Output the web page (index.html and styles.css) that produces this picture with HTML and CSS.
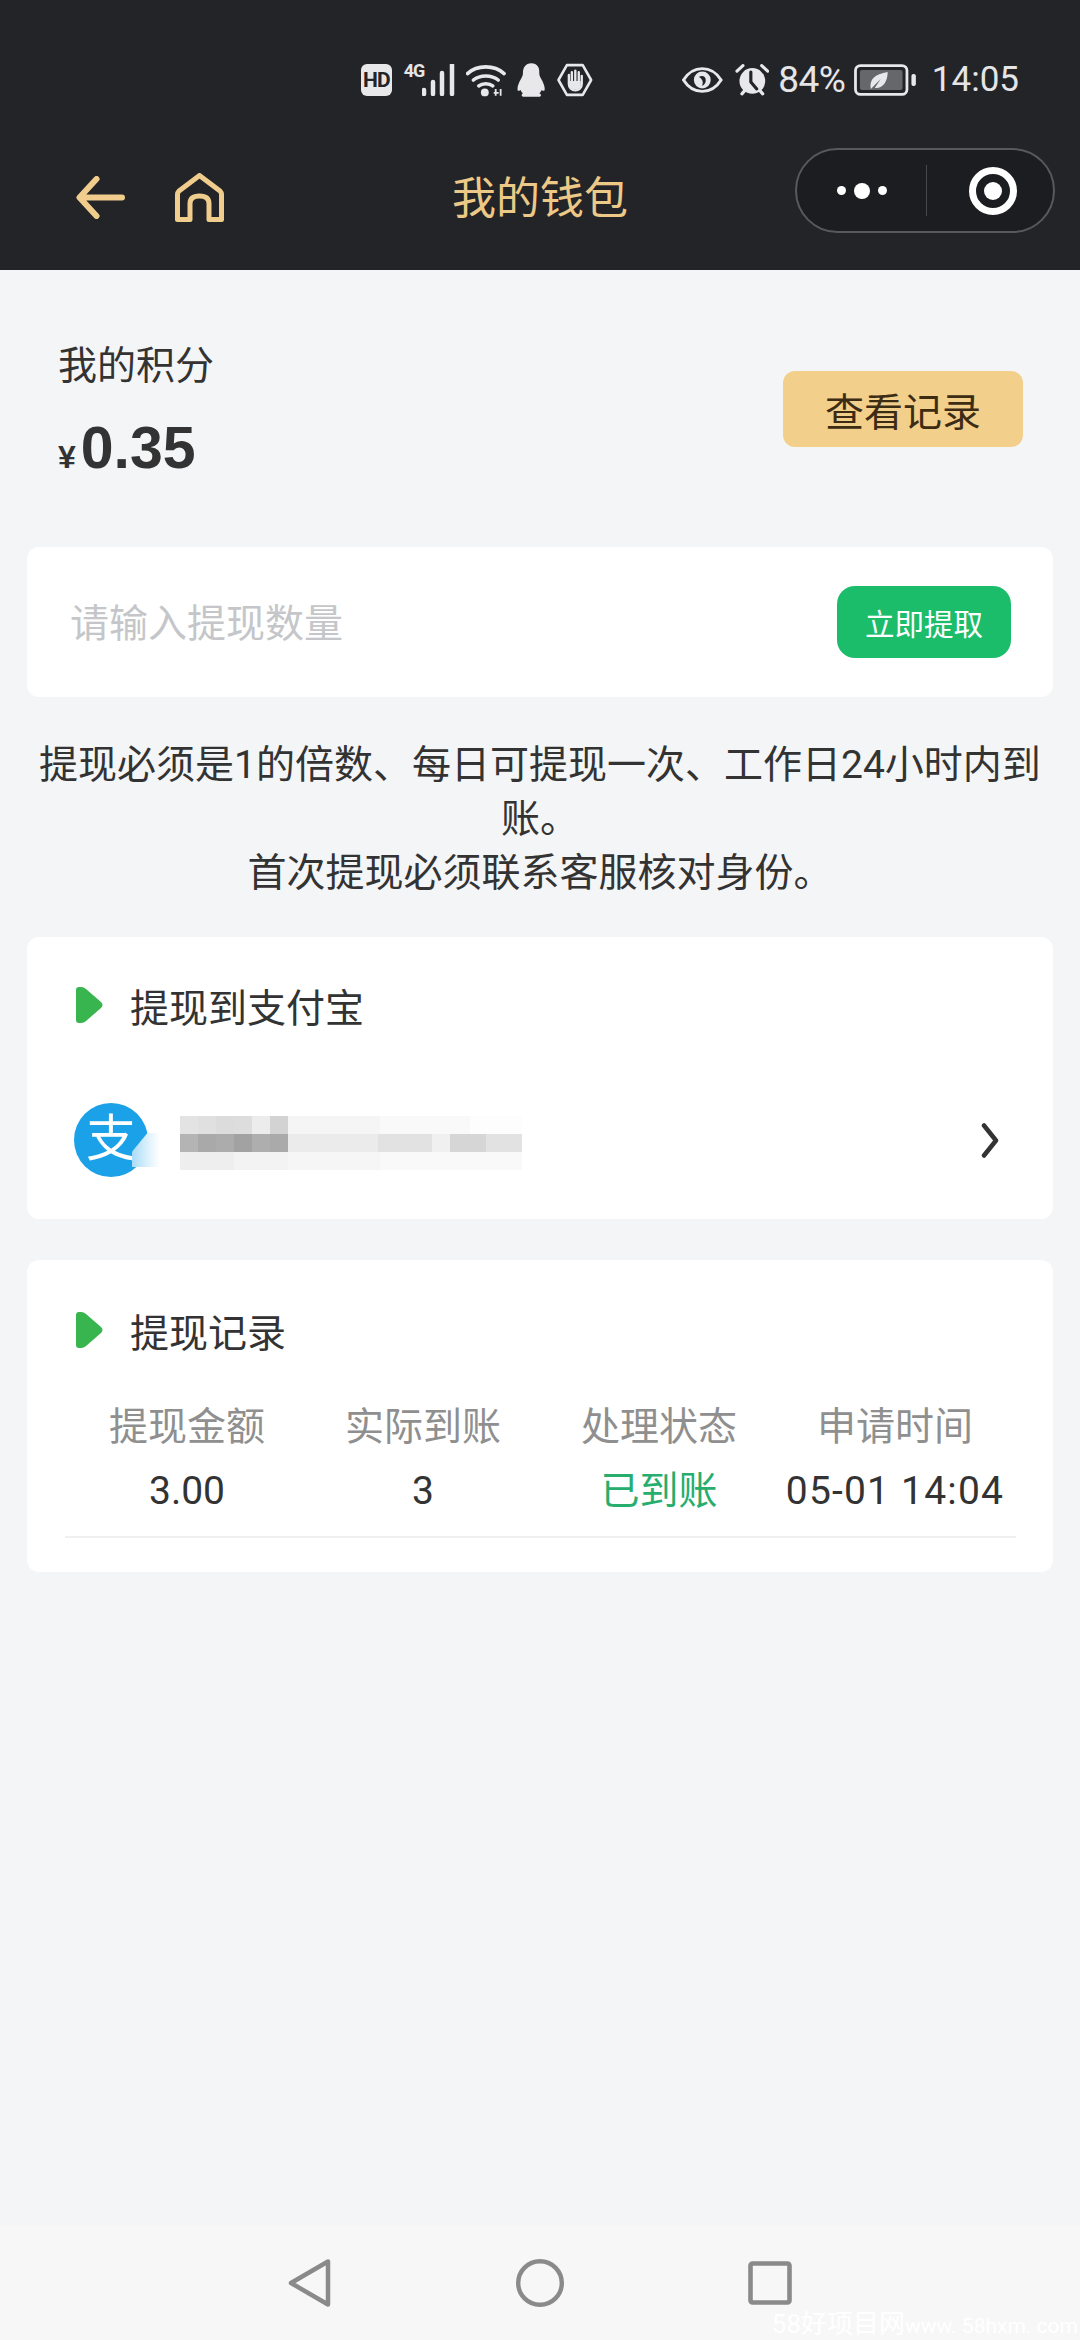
FILE: index.html
```html
<!DOCTYPE html>
<html lang="zh-CN">
  <head>
    <meta charset="UTF-8" />
    <meta name="viewport" content="width=device-width, initial-scale=1.0" />
    <title>我的钱包</title>
    <link rel="stylesheet" href="styles.css">
  </head>
  <body>
    <div class="page">
      <header class="top">
        <div class="status-bar">
          <div class="hd-badge">HD</div>
          <div class="signal">
            <span class="net-label">4G</span>
            <svg width="34" height="32" viewBox="0 0 34 32">
              <path d="M2 26v4M11 18v12M20 9v21M30 1v29" stroke="#e8e8ea" stroke-width="4.5" stroke-linecap="round" fill="none" />
            </svg>
          </div>
          <svg class="st-wifi" width="40" height="33" viewBox="0 0 40 33">
            <path d="M1.5 9.5C11.5 0.5 28.5 0.5 38.5 9.5M7.5 16C14 10.5 26 10.5 32.5 16M13 22c3.500-3 10.500-3 14 0" stroke="#e8e8ea" stroke-width="3.600" stroke-linecap="round" fill="none" />
            <circle cx="19" cy="28.500" r="4" fill="#e8e8ea" />
            <path d="M30 32v-7M35 25v7M28 29h5" stroke="#e8e8ea" stroke-width="1.800" fill="none" />
          </svg>
          <svg class="st-qq" width="29" height="34" viewBox="0 0 29 34">
            <path d="M14.500 0C8.500 0 6 4.500 6 10c0 2-.5 3.500-2 6-2 3.500-3.500 7-3.500 10 0 2 1 2.500 3 1 .8 1.500 1.500 2.500 2.500 3.500C4.500 31.500 4 33 6 34h17c2-1 1.500-2.500-.5-3.500 1-1 1.700-2 2.500-3.500 2 1.500 3 1 3-1 0-3-1.500-6.500-3.500-10-1.500-2.500-2-4-2-6C23 4.500 20.500 0 14.500 0z" fill="#e8e8ea" />
          </svg>
          <svg class="st-hand" width="36" height="34" viewBox="0 0 36 34">
            <path d="M10 2h16l8.500 15L26 32H10L1.500 17z" stroke="#e8e8ea" stroke-width="2.600" stroke-linejoin="round" fill="none" />
            <path d="M12 12v9c0 4 3 6.500 6.500 6.500S25 25 25 21v-8M15 9v9M18.500 7.500v10.500M22 9v9" stroke="#e8e8ea" stroke-width="2.400" stroke-linecap="round" fill="none" />
            <path d="M13 18h11v5c0 2-2.500 3.500-5.500 3.500S13 25 13 23z" fill="#e8e8ea" />
          </svg>

          <svg class="st-eye" width="41" height="26" viewBox="0 0 41 26">
            <path d="M1.500 13C6.500 5 13 1.500 20.500 1.500S34.500 5 39.500 13C34.500 21 28 24.500 20.500 24.500S6.500 21 1.500 13z" stroke="#e8e8ea" stroke-width="3" fill="none" />
            <circle cx="20.500" cy="13" r="8.500" fill="#e8e8ea" />
            <path d="M17 10c3-2 7-1 7 3s-2 5-4 6c2-3 1-7-3-9z" fill="#232428" />
          </svg>
          <svg class="st-alarm" width="35" height="32" viewBox="0 0 35 32">
            <path d="M2 7l6-5.500M33 7l-6-5.500M7 30l3-3.500M28 30l-3-3.500" stroke="#e8e8ea" stroke-width="3.200" stroke-linecap="round" fill="none" />
            <circle cx="17.500" cy="17" r="13" fill="#e8e8ea" />
            <path d="M16 8v10l6 7" stroke="#232428" stroke-width="3.200" stroke-linecap="round" stroke-linejoin="round" fill="none" />
          </svg>
          <span class="st-percent">84%</span>
          <svg class="st-battery" width="63" height="32" viewBox="0 0 63 32">
            <rect x="1.500" y="1.500" width="52" height="29" rx="5" stroke="#e8e8ea" stroke-width="2.800" fill="none" />
            <rect x="6" y="6" width="43" height="20" rx="2" fill="#66676a" />
            <path d="M17 25c-2-9 4-15 17-17 0 10-5 17-13 16l6-9-8 8z" fill="#e8e8ea" />
            <rect x="58" y="10" width="4.500" height="12" rx="2" fill="#e8e8ea" />
          </svg>
          <span class="st-time">14:05</span>
        </div>

        <nav class="nav">
          <div class="nav-left">
            <svg width="49" height="43" viewBox="0 0 49 43">
              <path d="M20.500 3L3.500 21.500l17 18.500M4.500 21.500h41.500" stroke="#f0cd8c" stroke-width="6" stroke-linecap="round" stroke-linejoin="round" fill="none" />
            </svg>
            <svg width="49" height="49" viewBox="0 0 49 49">
              <path d="M2.500 46.500V21.500q0-2 1.500-3.500L24.500 2.500 45 18q1.500 1.500 1.500 3.500v25H34V30.500q0-7.500-9.500-7.500T15 30.500v16z" stroke="#f0cd8c" stroke-width="5" stroke-linejoin="round" fill="none" />
            </svg>
          </div>
          <div class="nav-title">我的钱包</div>
          <div class="capsule">
            <div class="capsule-dots">
              <span class="dot"></span>
              <span class="dot dot-big"></span>
              <span class="dot"></span>
            </div>
            <span class="capsule-line"></span>
            <div class="capsule-target"></div>
          </div>
        </nav>
      </header>

      <main class="main">
        <section class="points">
          <div class="points-info">
            <div class="points-label">我的积分</div>
            <div class="points-amount"><span class="yen">¥</span>0.35</div>
          </div>
          <button class="btn-record">查看记录</button>
        </section>

        <section class="card withdraw">
          <input class="withdraw-input" type="text" placeholder="请输入提现数量" />
          <button class="btn-withdraw">立即提取</button>
        </section>

        <p class="notice">提现必须是1的倍数、每日可提现一次、工作日24小时内到账。<br />首次提现必须联系客服核对身份。</p>

        <section class="card card-alipay">
          <div class="card-title">
            <svg class="title-mark" width="27" height="36" viewBox="0 0 27 36">
              <path d="M3 0h2q3 0 5 2l15 13q3 3 0 6L10 34q-2 2-5 2H3q-3 0-3-3V3q0-3 3-3z" fill="#38b54f" />
            </svg>
            <span>提现到支付宝</span>
          </div>
          <div class="account">
            <div class="alipay-logo">
              <span class="alipay-char">支</span>
              <span class="alipay-edge"></span>
            </div>
            <div class="account-blur">
              <div class="blur-row blur-a"></div>
              <div class="blur-row blur-b"></div>
              <div class="blur-row blur-c"></div>
            </div>
            <svg class="account-arrow" width="18" height="35" viewBox="0 0 18 35">
              <path d="M3 2.500l12 15L3 32.500" stroke="#333" stroke-width="4.500" stroke-linecap="round" stroke-linejoin="round" fill="none" />
            </svg>
          </div>
        </section>

        <section class="card card-records">
          <div class="card-title">
            <svg class="title-mark" width="27" height="36" viewBox="0 0 27 36">
              <path d="M3 0h2q3 0 5 2l15 13q3 3 0 6L10 34q-2 2-5 2H3q-3 0-3-3V3q0-3 3-3z" fill="#38b54f" />
            </svg>
            <span>提现记录</span>
          </div>
          <div class="table-head">
            <div>提现金额</div>
            <div>实际到账</div>
            <div>处理状态</div>
            <div>申请时间</div>
          </div>
          <div class="table-row">
            <div>3.00</div>
            <div>3</div>
            <div class="state-ok">已到账</div>
            <div class="cell-date">05-01 14:04</div>
          </div>
        </section>
      </main>

      <footer class="sys-nav">
        <svg width="44" height="50" viewBox="0 0 44 50">
          <path d="M40 3.500v43L3 25z" stroke="#8a8a8a" stroke-width="4.500" stroke-linejoin="round" fill="none" />
        </svg>
        <svg width="48" height="48" viewBox="0 0 48 48">
          <circle cx="24" cy="24" r="21.800" stroke="#8a8a8a" stroke-width="4.400" fill="none" />
        </svg>
        <svg width="44" height="44" viewBox="0 0 44 44">
          <rect x="2.500" y="2.500" width="39" height="39" rx="2" stroke="#8a8a8a" stroke-width="4.600" fill="none" />
        </svg>
        <div class="watermark">58好项目网<span class="watermark-url">www. 58hxm. com</span></div>
      </footer>
    </div>
  </body>
</html>
```

FILE: styles.css
```css
* {
  box-sizing: border-box;
}
body {
  margin: 0;
  font-family: Roboto, "Noto Sans CJK SC", sans-serif;
  background-color: #f4f5f7;
  color: #333;
}
.page {
  display: flex;
  flex-direction: column;
  height: 2340px;
  overflow: hidden;
}

/* header */
.top {
  height: 270px;
  background-color: #232428;
}
.status-bar {
  display: flex;
  align-items: center;
  height: 97px;
  padding: 63px 61px 0 361px;
  color: #e5e5e7;
}
.hd-badge {
  width: 31px;
  height: 32px;
  border-radius: 6px;
  background-color: #e8e8ea;
  color: #232428;
  font-size: 21px;
  font-weight: 700;
  letter-spacing: -1px;
  line-height: 32px;
  text-align: center;
}
.signal {
  position: relative;
  width: 53px;
  height: 32px;
  margin-left: 12px;
  display: flex;
  justify-content: flex-end;
}
.net-label {
  position: absolute;
  left: 0;
  top: -2px;
  font-size: 18px;
  font-weight: 700;
  letter-spacing: -1px;
  line-height: 18px;
}
.st-wifi {
  margin-left: 10px;
}
.st-qq {
  margin-left: 11px;
}
.st-hand {
  margin-left: 12px;
}
.st-eye {
  margin-left: 89px;
}
.st-alarm {
  margin-left: 12px;
}
.st-percent {
  margin-left: 9px;
  font-size: 37px;
  letter-spacing: -0.5px;
  line-height: 32px;
}
.st-battery {
  margin-left: 9px;
}
.st-time {
  margin-left: 15px;
  font-size: 35px;
  line-height: 32px;
}

.nav {
  display: grid;
  grid-template-columns: 1fr auto 1fr;
  align-items: start;
  padding: 51px 25px 0;
}
.nav-left {
  display: flex;
  align-items: center;
  gap: 50px;
  margin-top: 25px;
  margin-left: 51px;
}
.nav-title {
  margin-top: 19px;
  font-size: 44px;
  line-height: 64px;
  color: #ecc987;
}
.capsule {
  justify-self: end;
  display: flex;
  align-items: center;
  width: 260px;
  height: 85px;
  border: 2px solid #58595c;
  border-radius: 43px;
  background-color: #1c1d20;
}
.capsule-dots {
  display: flex;
  align-items: center;
  justify-content: center;
  gap: 8px;
  width: 129px;
}
.dot {
  width: 9px;
  height: 9px;
  border-radius: 50%;
  background-color: #fff;
}
.dot-big {
  width: 16px;
  height: 16px;
}
.capsule-line {
  width: 1px;
  height: 51px;
  background-color: #48494c;
}
.capsule-target {
  position: relative;
  width: 48px;
  height: 48px;
  margin-left: 42px;
  border: 7px solid #fff;
  border-radius: 50%;
}
.capsule-target::after {
  content: "";
  position: absolute;
  left: 8px;
  top: 8px;
  width: 18px;
  height: 18px;
  border-radius: 50%;
  background-color: #fff;
}

/* content */
.main {
  flex: 1;
}
.points {
  display: flex;
  align-items: center;
  justify-content: space-between;
  height: 277px;
  padding: 0 57px 0 58px;
}
.points-info {
  margin-top: 6px;
}
.points-label {
  font-size: 39px;
  line-height: 54px;
}
.points-amount {
  margin-top: 27px;
  font-family: "Liberation Sans", sans-serif;
  font-size: 59px;
  font-weight: 700;
  line-height: 56px;
}
.yen {
  margin-right: 5px;
  font-size: 32px;
}
.btn-record {
  width: 240px;
  height: 76px;
  border: none;
  border-radius: 12px;
  background-color: #f3cf8c;
  color: #3d2c14;
  font-family: inherit;
  font-size: 39px;
}
.card {
  margin: 0 27px;
  border-radius: 12px;
  background-color: #fff;
}
.withdraw {
  display: flex;
  align-items: center;
  height: 150px;
  padding: 0 42px 0 43px;
}
.withdraw-input {
  flex: 1;
  min-width: 0;
  border: none;
  outline: none;
  padding: 4px 0 0;
  font-family: inherit;
  font-size: 39px;
  background: transparent;
}
.withdraw-input::placeholder {
  color: #c5c6c9;
}
.btn-withdraw {
  width: 174px;
  height: 72px;
  border: none;
  border-radius: 18px;
  background-color: #1bbd6a;
  color: #fff;
  font-family: inherit;
  font-size: 29.500px;
}
.notice {
  margin: 0;
  padding: 41px 36px 37px;
  font-size: 39px;
  line-height: 54px;
  text-align: center;
}
.card-alipay {
  height: 282px;
  padding-top: 50px;
}
.card-title {
  display: flex;
  align-items: flex-start;
  gap: 27px;
  padding-left: 49px;
  font-size: 39px;
  line-height: 44px;
}
.title-mark {
  flex: none;
}
.account {
  display: flex;
  align-items: center;
  margin-top: 72px;
  padding: 0 54px 0 47px;
}
.alipay-logo {
  position: relative;
  width: 74px;
  height: 74px;
  border-radius: 50%;
  background-color: #1ba1e8;
  text-align: center;
}
.alipay-char {
  color: #fff;
  font-size: 50px;
  line-height: 72px;
}
.alipay-edge {
  position: absolute;
  left: 58px;
  top: 30px;
  width: 28px;
  height: 34px;
  background: linear-gradient(90deg, #a9dcf8, #e9f6fd 70%, #fff);
  clip-path: polygon(55% 0, 100% 0, 100% 100%, 0 100%, 0 55%);
}
.account-blur {
  width: 342px;
  margin-top: 6px;
  margin-left: 32px;
}
.blur-row {
  height: 18px;
}
.blur-a {
  background: linear-gradient(90deg, #e3e3e3 0 18px, #e0e0e0 18px 36px, #dcdcdc 36px 54px, #dddddd 54px 72px, #ececec 72px 90px, #d3d3d3 90px 108px, #f5f5f5 108px 200px, #f9f9f9 200px 290px, #fdfdfd 290px);
}
.blur-b {
  background: linear-gradient(90deg, #b4b4b4 0 18px, #a9a9a9 18px 36px, #acacac 36px 54px, #a2a2a2 54px 72px, #aeaeae 72px 90px, #aaaaaa 90px 108px, #ebebeb 108px 198px, #e2e2e2 198px 252px, #f0f0f0 252px 270px, #d6d6d6 270px 306px, #e2e2e2 306px 342px);
}
.blur-c {
  background: linear-gradient(90deg, #eeeeee 0 54px, #f3f3f3 54px 108px, #f6f6f6 108px 200px, #f9f9f9 200px 342px);
}
.account-arrow {
  margin-left: auto;
}
.card-records {
  height: 312px;
  margin-top: 41px;
  padding-top: 52px;
}
.table-head,
.table-row {
  display: grid;
  grid-template-columns: repeat(4, 236px);
  text-align: center;
  white-space: nowrap;
  font-size: 39px;
  line-height: 54px;
}
.table-head {
  margin-top: 44px;
  margin-left: 42px;
  color: #8f8f8f;
}
.table-row {
  width: 951px;
  height: 74px;
  margin-top: 10px;
  margin-left: 38px;
  padding-left: 4px;
  border-bottom: 2px solid #f0f0f0;
}
.cell-date {
  letter-spacing: 1.200px;
}
.state-ok {
  color: #27ae6e;
}

/* bottom system bar */
.sys-nav {
  position: relative;
  display: flex;
  align-items: center;
  height: 114px;
  padding: 0 0 0 288px;
  gap: 184px;
  background-color: #f7f7f7;
}
.watermark {
  position: absolute;
  right: 2px;
  top: 84px;
  font-size: 26px;
  line-height: 28px;
  color: #fff;
  white-space: nowrap;
}
.watermark-url {
  font-size: 21px;
}
```
